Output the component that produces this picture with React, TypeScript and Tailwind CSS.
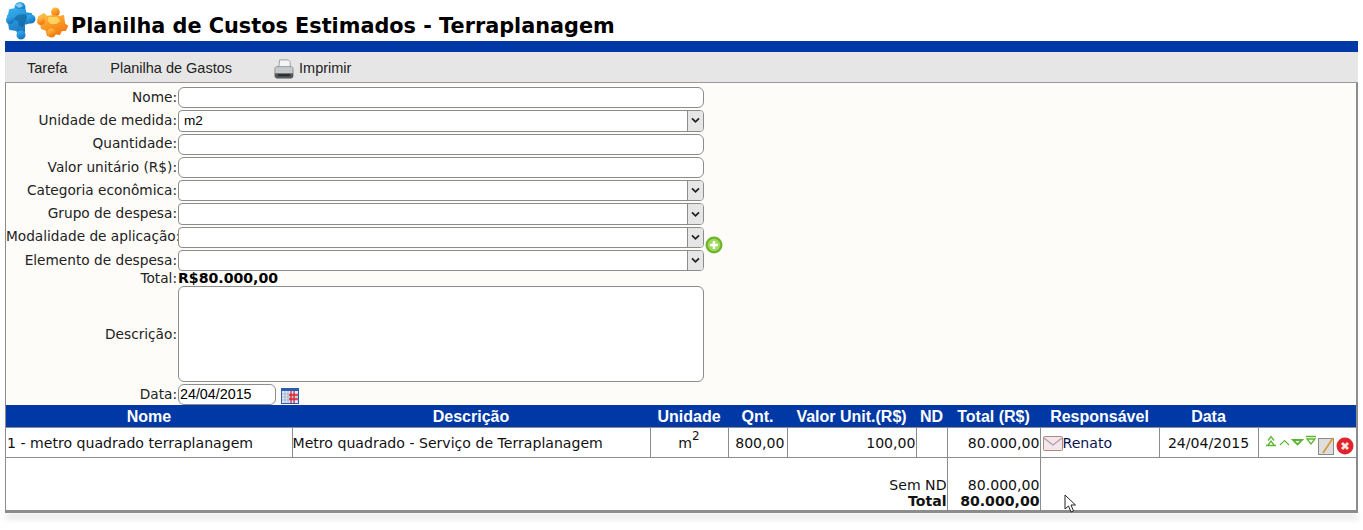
import { ReactNode } from "react";

const verdana = "font-['DejaVu_Sans',sans-serif]";
const arial = "font-['Liberation_Sans',Arial,sans-serif]";

function BluePuzzle() {
  return (
    <svg viewBox="0 0 30 38" preserveAspectRatio="none" className="w-[30px] h-[38px] mb-[1px] shrink-0">
      <defs>
        <linearGradient id="pzBlue" x1="0" y1="0" x2="0.5" y2="1">
          <stop offset="0" stopColor="#35b0ee" />
          <stop offset="1" stopColor="#1a78c4" />
        </linearGradient>
      </defs>
      <g fill="url(#pzBlue)" stroke="url(#pzBlue)" strokeWidth="2" strokeLinejoin="round">
        <circle cx="14" cy="5.500" r="4.500" />
        <path d="M9 8h10v3l6 1v8l-7 2 0 8-6 1-1-3-7-1-1-6-1-1v-6l1-1 1-5 6-1z" />
        <circle cx="25" cy="17" r="3.500" />
        <circle cx="4" cy="18" r="3" />
        <circle cx="15" cy="33" r="3.500" />
      </g>
      <path d="M12 13l7-1 2 3-2 6-2 4-4-1-1-5-4-1 1-3z" fill="#0f5d94" opacity="0.55" />
      <path d="M9 3l5-2 3 3-4 2z" fill="#aee2fa" opacity="0.7" />
    </svg>
  );
}

function OrangePuzzle() {
  return (
    <svg viewBox="0 0 36 31" preserveAspectRatio="none" className="w-[35px] h-[31px] mb-[3px] shrink-0">
      <defs>
        <linearGradient id="pzOrange" x1="0" y1="0" x2="0.5" y2="1">
          <stop offset="0" stopColor="#ffc04a" />
          <stop offset="1" stopColor="#f47c0e" />
        </linearGradient>
      </defs>
      <g fill="url(#pzOrange)" stroke="url(#pzOrange)" strokeWidth="2" strokeLinejoin="round">
        <circle cx="20" cy="5" r="3.500" />
        <path d="M3 10l5-3 3 3 6-1 8 1 3-1 1 8 3 2-2 4-4 0-2 4-5-1-3 3-4-1-1-5-5-2-1-5-2-2z" />
        <circle cx="5" cy="14" r="3" />
        <circle cx="16" cy="26" r="3.500" />
      </g>
      <path d="M13 10l9 0 3 4-4 3-6 0-3-3z" fill="#ffe06a" opacity="0.8" />
    </svg>
  );
}

function PrinterIcon() {
  return (
    <svg viewBox="0 0 24 24" className="w-[23px] h-[23px] shrink-0">
      <path d="M8 2h9l2 2v6H7z" fill="#f4f5f6" stroke="#9aa0a6" strokeWidth="1" />
      <path d="M3 11c0-1 1-2 2-2h15c1 0 2 1 2 2v8c0 1-1 2-2 2H5c-1 0-2-1-2-2z" fill="#c6cacd" stroke="#808488" strokeWidth="0.8" />
      <path d="M3 16h19v3c0 1-1 2-2 2H5c-1 0-2-1-2-2z" fill="#55595c" />
      <rect x="6" y="17" width="13" height="2" fill="#26282a" />
    </svg>
  );
}

function CalendarIcon() {
  return (
    <svg viewBox="0 0 18 16" className="w-[18px] h-[16px] shrink-0">
      <rect width="18" height="16" fill="#2a5db0" />
      <rect x="1" y="3" width="16" height="12" fill="#dfe8f5" />
      <path d="M1 6h16M1 9h16M1 12h16M4 3v12M7 3v12" stroke="#a8b4c8" strokeWidth="1" />
      <path d="M10 3v12M13 3v12M8 7h9M8 11h9" stroke="#e0202a" strokeWidth="1.300" />
    </svg>
  );
}

function AddIcon() {
  return (
    <svg viewBox="0 0 18 18" className="w-[18px] h-[18px] shrink-0">
      <circle cx="9" cy="9" r="8.500" fill="#6fb52c" />
      <circle cx="9" cy="9" r="6.200" fill="#9ed85c" />
      <path d="M9 5v8M5 9h8" stroke="#fff" strokeWidth="2.600" />
    </svg>
  );
}

function MailIcon() {
  return (
    <svg viewBox="0 0 20 15" className="w-[20px] h-[15px] shrink-0">
      <rect x="0.500" y="0.500" width="19" height="14" rx="1" fill="#f1e6ea" stroke="#b08a80" />
      <path d="M1 2l9 7 9-7" fill="none" stroke="#b79aa8" strokeWidth="1.200" />
    </svg>
  );
}

function MoveIcons() {
  return (
    <svg viewBox="0 0 52 12" className="w-[52px] h-[12px] shrink-0">
      <g fill="none" stroke="#5cb531" strokeWidth="1.300">
        <path d="M3 5.500l3-4 3 4M1 10.500h10M3 10l3-4 3 4" />
        <path d="M15 10l4.500-4.500 4.500 4.500" strokeWidth="1.100" />
        <path d="M28 5h9l-4.500 4.500z" strokeWidth="1.800" />
        <path d="M41 1.500h10M42 4h8l-4 5z" />
      </g>
    </svg>
  );
}

function NoteIcon() {
  return (
    <svg viewBox="0 0 17 18" className="w-[17px] h-[18px] shrink-0">
      <rect x="0.500" y="1.500" width="15" height="16" fill="#dedede" stroke="#8a8a8a" />
      <path d="M15 1L5 16" stroke="#d99e3c" strokeWidth="1.800" />
    </svg>
  );
}

function DeleteIcon() {
  return (
    <svg viewBox="0 0 18 18" className="w-[18px] h-[18px] shrink-0">
      <circle cx="9" cy="9" r="8.500" fill="#e0242c" />
      <path d="M6 6l6 6M12 6l-6 6" stroke="#fde4e4" strokeWidth="2.800" />
    </svg>
  );
}

function Field({ label, leading = "leading-[16px] pb-[2px]", children }: { label: string; leading?: string; children: ReactNode }) {
  return (
    <>
      <div className={`text-right pr-[1px] text-[13.700px] ${leading} text-[#222] self-center whitespace-nowrap`}>{label}</div>
      <div className="flex items-center">{children}</div>
    </>
  );
}

function TextBox({ height = "h-[21.300px]" }: { height?: string }) {
  return <div className={`w-[526px] ${height} bg-white border border-[#8c8c8c] rounded-[6px] my-[1px]`} />;
}

function SelectBox({ value }: { value?: string }) {
  return (
    <div className={`w-[526px] h-[21.300px] my-[1px] bg-white border border-[#8c8c8c] rounded-[4px] flex items-center justify-between overflow-hidden ${arial}`}>
      <span className="pl-[5px] text-[13.600px] text-black">{value}</span>
      <span className="w-[16px] h-full bg-[#e6e6e6] border-l border-[#8c8c8c] flex items-center justify-center">
        <svg viewBox="0 0 10 8" className="w-[9px] h-[7px]">
          <path d="M1 1.500l4 4 4-4" fill="none" stroke="#222" strokeWidth="2" />
        </svg>
      </span>
    </div>
  );
}

const headers = [
  ["Nome", "w-[286px]"],
  ["Descrição", "w-[358px]"],
  ["Unidade", "w-[78px]"],
  ["Qnt.", "w-[59px]"],
  ["Valor Unit.(R$)", "w-[129px]"],
  ["ND", "w-[31px]"],
  ["Total (R$)", "w-[93px]"],
  ["Responsável", "w-[119px]"],
  ["Data", "w-[99px]"],
  ["", "w-[98px]"],
];

const cellLine = "border-l border-[#8c8c8c]";

export default function App() {
  return (
    <div className={`relative w-[1363px] h-[530px] bg-white overflow-hidden ${verdana}`}>
      <div className="h-[41px] pl-[6px] flex items-end">
        <BluePuzzle />
        <OrangePuzzle />
        <h1 className="text-[20.800px] leading-[30px] font-bold text-black whitespace-nowrap">Planilha de Custos Estimados - Terraplanagem</h1>
      </div>
      <div className="mx-[5px] w-[1353px]">
        <div className="h-[11px] bg-[#0039a6]" />
        <div className={`h-[31px] pt-[4px] bg-[#e6e6e6] border-b border-[#999] flex items-center text-[14.500px] text-[#222] ${arial}`}>
          <span className="ml-[22px]">Tarefa</span>
          <span className="ml-[43px]">Planilha de Gastos</span>
          <span className="ml-[40px] flex items-center gap-[4px]">
            <PrinterIcon />
            Imprimir
          </span>
        </div>
        <div className="border-l border-r-[2px] border-[#8c8c8c]">
          <div className="h-[322px] bg-[#fdfcf8] pt-[3px] grid grid-cols-[172px_1fr] auto-rows-min">
            <Field label="Nome:"><TextBox /></Field>
            <Field label="Unidade de medida:"><SelectBox value="m2" /></Field>
            <Field label="Quantidade:"><TextBox /></Field>
            <Field label="Valor unitário (R$):"><TextBox /></Field>
            <Field label="Categoria econômica:"><SelectBox /></Field>
            <Field label="Grupo de despesa:"><SelectBox /></Field>
            <Field label="Modalidade de aplicação:">
              <SelectBox />
              <span className="self-start ml-[1px] mt-[10px] -mb-[10px]"><AddIcon /></span>
            </Field>
            <Field label="Elemento de despesa:"><SelectBox /></Field>
            <Field label="Total:" leading="leading-[13px]">
              <span className="text-[14.100px] leading-[13px] font-bold text-black">R$80.000,00</span>
            </Field>
            <Field label="Descrição:" leading="leading-[16px]"><TextBox height="h-[96px]" /></Field>
            <Field label="Data:" leading="leading-[16px]">
              <div className={`w-[98px] h-[21px] mt-[1px] bg-white border border-[#8c8c8c] rounded-[6px] pl-[1px] text-[14.300px] leading-[19px] text-black ${arial}`}>24/04/2015</div>
              <span className="ml-[5px] mt-[3px]"><CalendarIcon /></span>
            </Field>
          </div>
          <div className="bg-white">
            <table className="table-fixed border-collapse w-full">
              <thead>
                <tr className="h-[22px] bg-[#0039a6]">
                  {headers.map(([h, w], i) => (
                    <th key={i} className={`${w} p-0 pt-[2px] text-[16px] leading-[20px] font-bold text-white text-center whitespace-nowrap ${arial}`}>{h}</th>
                  ))}
                </tr>
              </thead>
              <tbody className="text-[14.100px] text-[#111]">
                <tr className="h-[30px] border-y border-[#8c8c8c]">
                  <td className="pl-[1px] pt-[3px] whitespace-nowrap">1 - metro quadrado terraplanagem</td>
                  <td className={`${cellLine} pt-[3px] whitespace-nowrap`}>Metro quadrado - Serviço de Terraplanagem</td>
                  <td className={`${cellLine} pt-[3px] text-center`}>m<sup className="text-[12px] leading-none align-[2px]">2</sup></td>
                  <td className={`${cellLine} pt-[3px] text-right pr-[2px]`}>800,00</td>
                  <td className={`${cellLine} pt-[3px] text-right`}>100,00</td>
                  <td className={cellLine} />
                  <td className={`${cellLine} pt-[3px] text-right`}>80.000,00</td>
                  <td className={cellLine}>
                    <div className="flex items-center pl-[2px] pt-[2px] text-[#0a1250]"><MailIcon />Renato</div>
                  </td>
                  <td className={`${cellLine} pt-[3px] text-center`}>24/04/2015</td>
                  <td className={cellLine}>
                    <div className="flex items-start pl-[6px] pt-[5px]">
                      <MoveIcons />
                      <span className="ml-[1px] mt-[2px] flex items-center gap-[1px]"><NoteIcon /><DeleteIcon /></span>
                    </div>
                  </td>
                </tr>
                <tr className="h-[20px]">
                  <td colSpan={6} />
                  <td className="border-x border-[#8c8c8c]" />
                  <td colSpan={3} />
                </tr>
                <tr className="h-[15px] leading-[15px]">
                  <td colSpan={6} className="text-right">Sem ND</td>
                  <td className="border-x border-[#8c8c8c] text-right">80.000,00</td>
                  <td colSpan={3} />
                </tr>
                <tr className="h-[17px] leading-[15px] font-bold">
                  <td colSpan={6} className="text-right">Total</td>
                  <td className="border-x border-[#8c8c8c] text-right">80.000,00</td>
                  <td colSpan={3} />
                </tr>
              </tbody>
            </table>
          </div>
        </div>
        <div className="h-[3px] bg-[#8c8c8c] shadow-[0_5px_6px_rgba(0,0,0,0.18)]" />
      </div>
      {/* mouse pointer caught in the screenshot */}
      <svg viewBox="0 0 13 20" className="absolute left-[1064px] top-[494px] w-[13px] h-[20px]">
        <path d="M1 1v14l3.500-3 2.500 6 2.500-1-2.500-6h4.500z" fill="#fff" stroke="#222" strokeWidth="1" />
      </svg>
    </div>
  );
}
